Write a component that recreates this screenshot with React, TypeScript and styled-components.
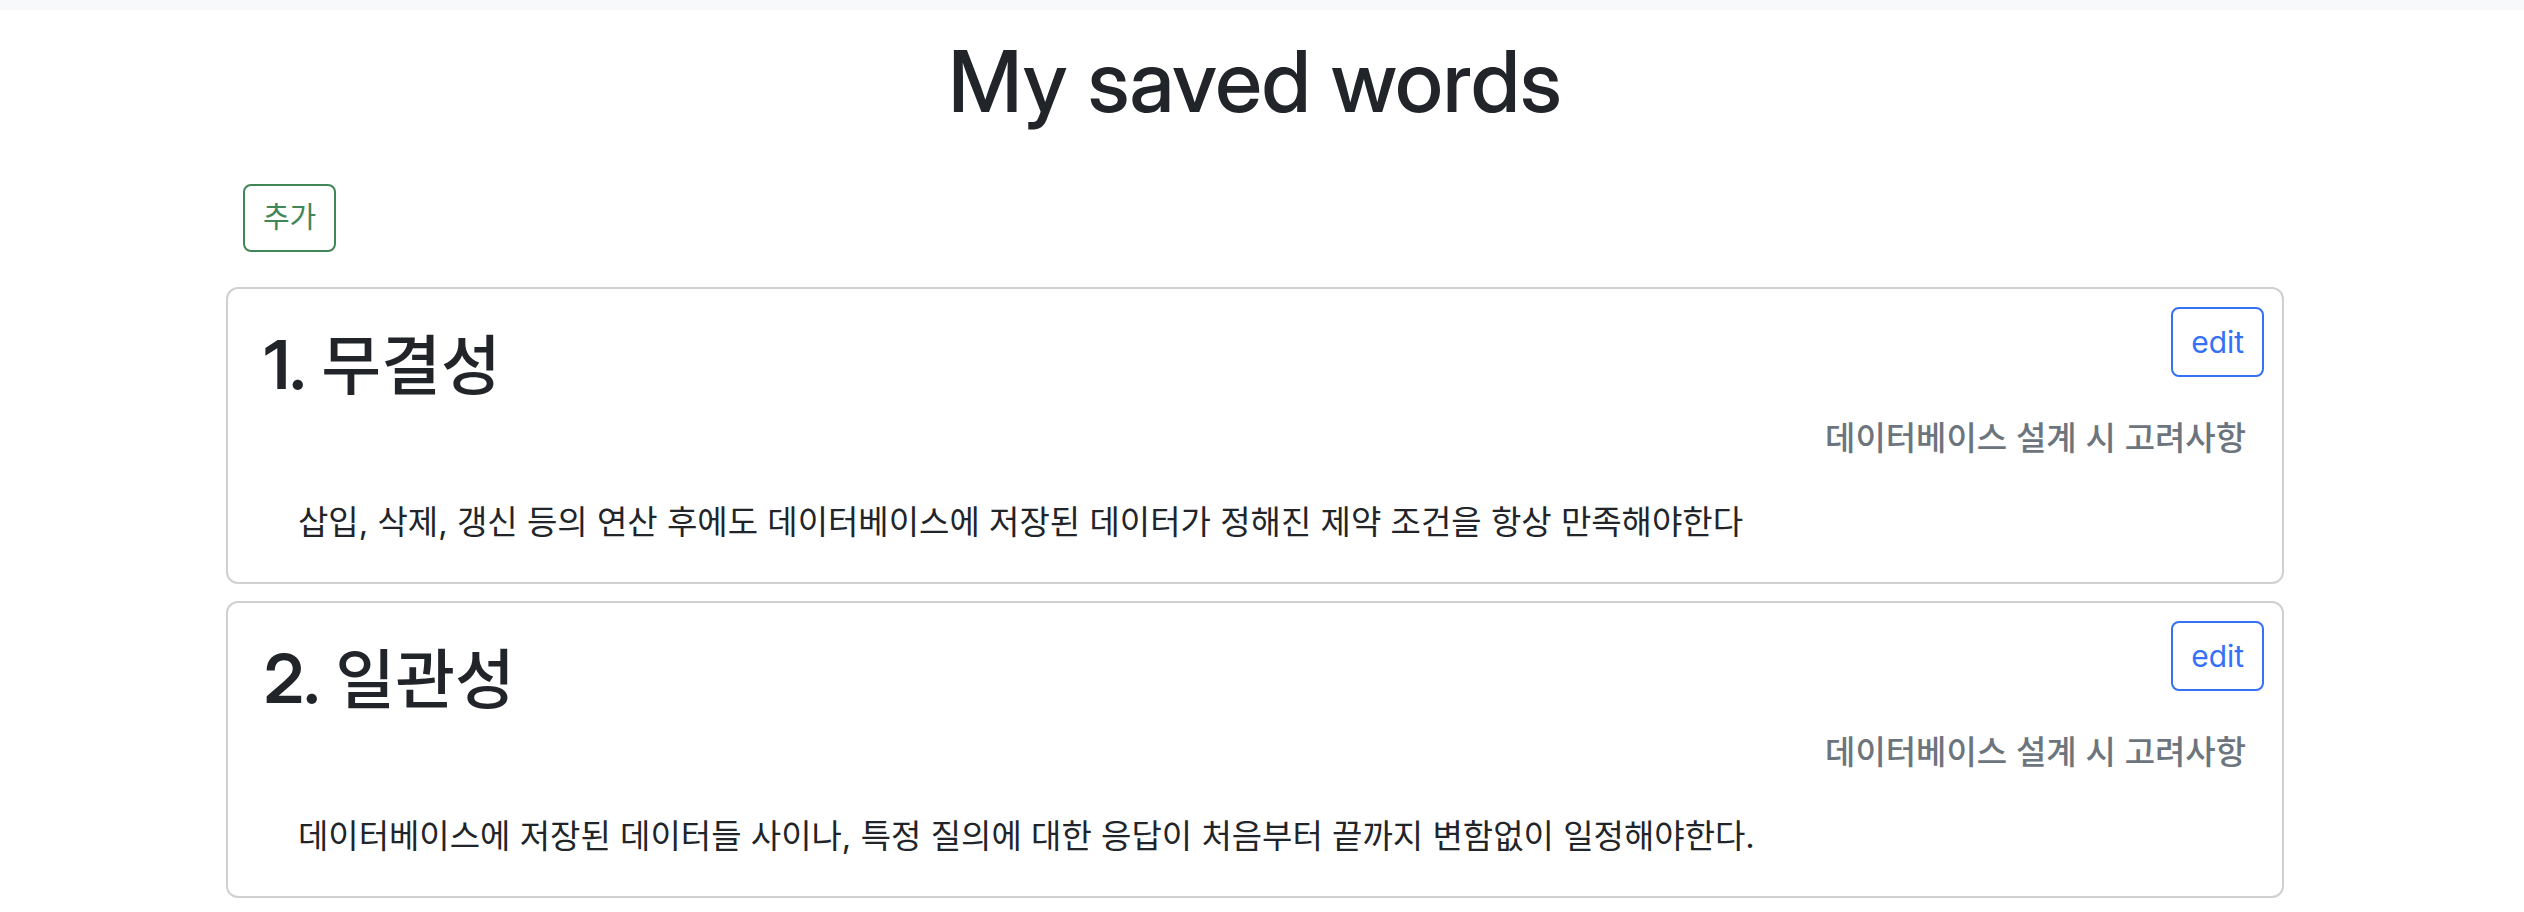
import React from "react";
import styled, { createGlobalStyle } from "styled-components";

const Global = createGlobalStyle`
  *, *::before, *::after { box-sizing: border-box; }
  body {
    margin: 0;
    background: #fff;
    color: #212529;
    font-family: Inter, "Noto Sans CJK KR", sans-serif;
    font-size: 33px;
    line-height: 48px;
  }
`;

const TopStrip = styled.div`
  height: 10px;
  background: #f8f9fb;
`;

const Page = styled.main`
  padding-right: 14px;
`;

const Title = styled.h1`
  margin: 24px 0 48px;
  font-family: "Inter Display", Inter, sans-serif;
  font-size: 85px;
  line-height: 96px;
  font-weight: 500;
  text-align: center;
`;

const Content = styled.div`
  width: 82%;
  margin: 0 auto;
  padding-bottom: 14px;
`;

const Toolbar = styled.div`
  display: flex;
  padding: 6px 17px;
`;

const Button = styled.button`
  padding: 8px 18px;
  border: 2px solid currentColor;
  border-radius: 8px;
  background: transparent;
  font: inherit;
`;

const AddButton = styled(Button)`
  color: #418657;
  font-size: 29px;
  line-height: 48px;
`;

const EditButton = styled(Button)`
  color: #3471f6;
  font-size: 30px;
  line-height: 50px;
`;

const List = styled.div`
  display: flex;
  flex-direction: column;
  gap: 17px;
  margin-top: 29px;
`;

const Card = styled.article`
  padding: 18px 18px 36px;
  border: 2px solid #d0d0d0;
  border-radius: 12px;
`;

const CardHead = styled.header`
  display: flex;
  justify-content: space-between;
  align-items: flex-start;
`;

const Word = styled.h2`
  margin: 19px 18px 0;
  font-family: "Inter Display", Inter, "Noto Sans CJK KR", sans-serif;
  font-size: 65px;
  line-height: 80px;
  font-weight: 500;
`;

const Ordinal = styled.span`
  font-size: 68px;
  line-height: 64px;
  font-weight: 600;
`;

const Source = styled.h3`
  margin: 8px 18px 0;
  color: #6c757d;
  font-size: 33px;
  line-height: 48px;
  font-weight: 500;
  text-align: right;
`;

const Meaning = styled.p`
  margin: 36px 52px 0;
`;

const words = [
  {
    word: "무결성",
    source: "데이터베이스 설계 시 고려사항",
    meaning: "삽입, 삭제, 갱신 등의 연산 후에도 데이터베이스에 저장된 데이터가 정해진 제약 조건을 항상 만족해야한다",
  },
  {
    word: "일관성",
    source: "데이터베이스 설계 시 고려사항",
    meaning: "데이터베이스에 저장된 데이터들 사이나, 특정 질의에 대한 응답이 처음부터 끝까지 변함없이 일정해야한다.",
  },
];

export default function App() {
  return (
    <>
      <Global />
      <TopStrip />
      <Page>
        <Title>My saved words</Title>
        <Content>
          <Toolbar>
            <AddButton type="button">추가</AddButton>
          </Toolbar>
          <List>
            {words.map((item, i) => (
              <Card key={item.word}>
                <CardHead>
                  <Word>
                    <Ordinal>{i + 1}.</Ordinal> {item.word}
                  </Word>
                  <EditButton type="button">edit</EditButton>
                </CardHead>
                <Source>{item.source}</Source>
                <Meaning>{item.meaning}</Meaning>
              </Card>
            ))}
          </List>
        </Content>
      </Page>
    </>
  );
}
